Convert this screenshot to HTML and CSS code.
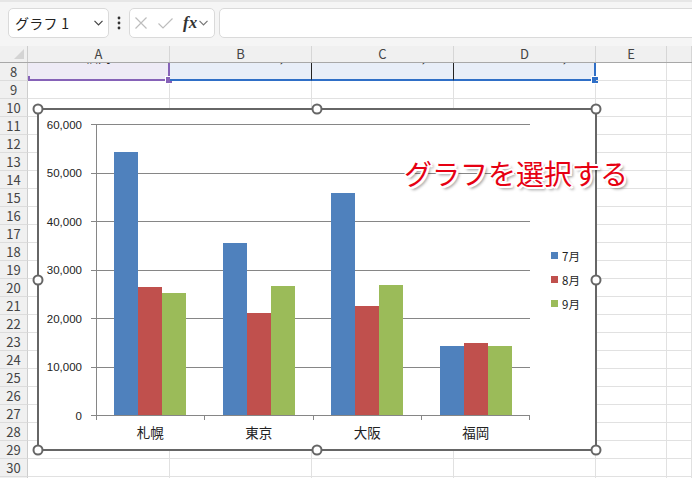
FILE: index.html
```html
<!DOCTYPE html>
<html lang="ja">
<head>
<meta charset="utf-8">
<title>グラフ 1</title>
<link rel="stylesheet" href="styles.css">
</head>
<body>
<div class="toolbar">
  <div class="box namebox"><span>グラフ 1</span><svg class="chev" width="9" height="6" viewBox="0 0 9 6"><polyline points="0.5,0.8 4.5,4.8 8.5,0.8" fill="none" stroke="#444" stroke-width="1.2"/></svg></div>
  <div class="dots"><svg width="4" height="14" viewBox="0 0 4 14"><circle cx="2" cy="2" r="1.4" fill="#333"/><circle cx="2" cy="7" r="1.4" fill="#333"/><circle cx="2" cy="12" r="1.4" fill="#333"/></svg></div>
  <div class="box fxbox">
    <svg class="ico-x" width="12" height="12" viewBox="0 0 12 12"><path d="M0.5 0.5 L11.5 11.5 M11.5 0.5 L0.5 11.5" stroke="#bdbdbd" stroke-width="1.2" fill="none"/></svg>
    <svg class="ico-ok" width="15" height="11" viewBox="0 0 15 11"><polyline points="0.5,5.5 5,10 14.5,0.5" fill="none" stroke="#bdbdbd" stroke-width="1.2"/></svg>
    <span class="fx">fx</span>
    <svg class="chev2" width="9" height="6" viewBox="0 0 9 6"><polyline points="0.5,0.8 4.5,4.8 8.5,0.8" fill="none" stroke="#777" stroke-width="1.2"/></svg>
  </div>
  <div class="box formula"></div>
</div>

<div class="sheet">
  <div class="row head">
    <div class="corner"><i></i></div>
    <div class="h">A</div><div class="h">B</div><div class="h">C</div><div class="h">D</div><div class="h">E</div><div class="h"></div>
  </div>
  <div class="row r8">
    <div class="rh">8</div>
    <div class="c a"><span class="clip"><span class="t">福岡</span></span><i class="hdl hp"></i><i class="hdl-l"></i></div>
    <div class="c v"><span class="clip"><span class="t">14,210</span></span></div>
    <div class="c v"><span class="clip"><span class="t">14,830</span></span></div>
    <div class="c v last"><span class="clip"><span class="t">14,250</span></span><i class="hdl hb"></i></div>
    <div class="c"></div><div class="c"></div>
  </div>
  <div class="row"><div class="rh">9</div><div class="c"></div><div class="c"></div><div class="c"></div><div class="c"></div><div class="c"></div><div class="c"></div></div>
  <div class="row"><div class="rh">10</div><div class="c"></div><div class="c"></div><div class="c"></div><div class="c"></div><div class="c"></div><div class="c"></div></div>
  <div class="row"><div class="rh">11</div><div class="c"></div><div class="c"></div><div class="c"></div><div class="c"></div><div class="c"></div><div class="c"></div></div>
  <div class="row"><div class="rh">12</div><div class="c"></div><div class="c"></div><div class="c"></div><div class="c"></div><div class="c"></div><div class="c"></div></div>
  <div class="row"><div class="rh">13</div><div class="c"></div><div class="c"></div><div class="c"></div><div class="c"></div><div class="c"></div><div class="c"></div></div>
  <div class="row"><div class="rh">14</div><div class="c"></div><div class="c"></div><div class="c"></div><div class="c"></div><div class="c"></div><div class="c"></div></div>
  <div class="row"><div class="rh">15</div><div class="c"></div><div class="c"></div><div class="c"></div><div class="c"></div><div class="c"></div><div class="c"></div></div>
  <div class="row"><div class="rh">16</div><div class="c"></div><div class="c"></div><div class="c"></div><div class="c"></div><div class="c"></div><div class="c"></div></div>
  <div class="row"><div class="rh">17</div><div class="c"></div><div class="c"></div><div class="c"></div><div class="c"></div><div class="c"></div><div class="c"></div></div>
  <div class="row"><div class="rh">18</div><div class="c"></div><div class="c"></div><div class="c"></div><div class="c"></div><div class="c"></div><div class="c"></div></div>
  <div class="row"><div class="rh">19</div><div class="c"></div><div class="c"></div><div class="c"></div><div class="c"></div><div class="c"></div><div class="c"></div></div>
  <div class="row"><div class="rh">20</div><div class="c"></div><div class="c"></div><div class="c"></div><div class="c"></div><div class="c"></div><div class="c"></div></div>
  <div class="row"><div class="rh">21</div><div class="c"></div><div class="c"></div><div class="c"></div><div class="c"></div><div class="c"></div><div class="c"></div></div>
  <div class="row"><div class="rh">22</div><div class="c"></div><div class="c"></div><div class="c"></div><div class="c"></div><div class="c"></div><div class="c"></div></div>
  <div class="row"><div class="rh">23</div><div class="c"></div><div class="c"></div><div class="c"></div><div class="c"></div><div class="c"></div><div class="c"></div></div>
  <div class="row"><div class="rh">24</div><div class="c"></div><div class="c"></div><div class="c"></div><div class="c"></div><div class="c"></div><div class="c"></div></div>
  <div class="row"><div class="rh">25</div><div class="c"></div><div class="c"></div><div class="c"></div><div class="c"></div><div class="c"></div><div class="c"></div></div>
  <div class="row"><div class="rh">26</div><div class="c"></div><div class="c"></div><div class="c"></div><div class="c"></div><div class="c"></div><div class="c"></div></div>
  <div class="row"><div class="rh">27</div><div class="c"></div><div class="c"></div><div class="c"></div><div class="c"></div><div class="c"></div><div class="c"></div></div>
  <div class="row"><div class="rh">28</div><div class="c"></div><div class="c"></div><div class="c"></div><div class="c"></div><div class="c"></div><div class="c"></div></div>
  <div class="row"><div class="rh">29</div><div class="c"></div><div class="c"></div><div class="c"></div><div class="c"></div><div class="c"></div><div class="c"></div></div>
  <div class="row"><div class="rh">30</div><div class="c"></div><div class="c"></div><div class="c"></div><div class="c"></div><div class="c"></div><div class="c"></div></div>
  <div class="row"><div class="rh">31</div><div class="c"></div><div class="c"></div><div class="c"></div><div class="c"></div><div class="c"></div><div class="c"></div></div>

  <div class="chart">
    <div class="ylabels">
      <div class="yl"><span>60,000</span><i></i></div>
      <div class="yl"><span>50,000</span><i></i></div>
      <div class="yl"><span>40,000</span><i></i></div>
      <div class="yl"><span>30,000</span><i></i></div>
      <div class="yl"><span>20,000</span><i></i></div>
      <div class="yl"><span>10,000</span><i></i></div>
      <div class="yl"><span>0</span><i></i></div>
    </div>
    <div class="plot">
      <div class="lines"><div></div><div></div><div></div><div></div><div></div><div></div></div>
      <div class="bars">
        <div class="cat"><div class="bar s7" style="height:263px"></div><div class="bar s8" style="height:128px"></div><div class="bar s9" style="height:122px"></div></div>
        <div class="cat"><div class="bar s7" style="height:172px"></div><div class="bar s8" style="height:102px"></div><div class="bar s9" style="height:129px"></div></div>
        <div class="cat"><div class="bar s7" style="height:222px"></div><div class="bar s8" style="height:109px"></div><div class="bar s9" style="height:130px"></div></div>
        <div class="cat"><div class="bar s7" style="height:69px"></div><div class="bar s8" style="height:72px"></div><div class="bar s9" style="height:69px"></div></div>
      </div>
    </div>
    <div class="legend">
      <div class="li"><b class="s7"></b>7月</div>
      <div class="li"><b class="s8"></b>8月</div>
      <div class="li"><b class="s9"></b>9月</div>
    </div>
    <div class="xaxis">
      <div class="xticks"><i></i><i></i><i></i><i></i></div>
      <div class="xlabels"><span>札幌</span><span>東京</span><span>大阪</span><span>福岡</span></div>
    </div>
    <div class="handles">
      <i class="hd t l"></i><i class="hd t m"></i><i class="hd t r"></i>
      <i class="hd mid l"></i><i class="hd mid r"></i>
      <i class="hd b l"></i><i class="hd b m"></i><i class="hd b r"></i>
    </div>
  </div>

  <div class="callout">グラフを選択する</div>
</div>
</body>
</html>
```

FILE: styles.css
```css
* { box-sizing: border-box; margin: 0; padding: 0; }

body {
  width: 692px;
  height: 478px;
  overflow: hidden;
  background: #fff;
  font-family: "Noto Sans CJK JP", "Noto Sans", sans-serif;
  color: #222;
}

/* ---------- formula bar ---------- */
.toolbar {
  height: 46px;
  background: #f5f5f5;
  border-top: 2px solid #e6e6e6;
  display: flex;
  align-items: flex-start;
  padding: 6px 0 0 8px;
  overflow: hidden;
}

.box {
  height: 30px;
  background: #fff;
  border: 1px solid #dadada;
  border-radius: 5px;
  display: flex;
  align-items: center;
}

.namebox {
  width: 101px;
  padding: 0 5px 0 6px;
  justify-content: space-between;
  font-size: 14px;
  line-height: 1;
  letter-spacing: 0.3px;
  color: #222;
}

.dots {
  width: 20px;
  height: 30px;
  display: flex;
  align-items: center;
  justify-content: center;
}

.fxbox {
  width: 86px;
  padding-left: 5px;
}

.ico-ok { margin-left: 11px; }

.fx {
  margin-left: 10px;
  font-family: "Liberation Serif", serif;
  font-style: italic;
  font-weight: bold;
  font-size: 17px;
  line-height: 1;
  color: #333;
  margin-top: -2px;
}

.chev2 { margin-left: 2px; }

.formula {
  flex: 1;
  margin-left: 4px;
  margin-right: -10px;
}

/* ---------- sheet ---------- */
.sheet {
  position: relative;
  height: 432px;
  overflow: hidden;
}

.row {
  display: grid;
  grid-template-columns: 28px 142px 142px 142px 142px 71px 1fr;
  height: 18px;
}

.rh {
  background: #f0f0f0;
  border-right: 1px solid #cdcdcd;
  border-bottom: 1px solid #dcdcdc;
  font-size: 13px;
  line-height: 17px;
  color: #444;
  text-align: center;
}

.c {
  border-right: 1px solid #e1e1e1;
  border-bottom: 1px solid #e1e1e1;
}

.head {
  height: 17px;
  background: #f0f0f0;
  border-bottom: 1px solid #a8a8a8;
}

.head .h {
  border-right: 1px solid #d6d6d6;
  text-align: center;
  font-size: 13px;
  line-height: 16px;
  color: #444;
}

.corner {
  border-right: 1px solid #cdcdcd;
  display: flex;
  align-items: flex-end;
  justify-content: flex-end;
  padding: 0 3px 3px 0;
}

.corner i {
  width: 0;
  height: 0;
  border-left: 10px solid transparent;
  border-bottom: 10px solid #d4d4d4;
}

/* row 8 : data range highlight */
.r8 { height: 18px; }

.r8 .c {
  position: relative;
  font-size: 13px;
  color: #222;
}

.r8 .clip {
  display: block;
  height: 100%;
  overflow: hidden;
}

.r8 .t {
  display: block;
  margin-top: -15px;
  line-height: 18px;
}

.r8 .a {
  background: #eeebf6;
  border-bottom: 2px solid #8662b8;
  border-right: 2px solid #8662b8;
  text-align: center;
}

.r8 .v {
  background: #e8eef8;
  border-bottom: 2px solid #2f6fc7;
  border-right: 1px solid #222;
  text-align: right;
  padding-right: 6px;
}

.r8 .v.last { border-right: 2px solid #2f6fc7; }

.hdl {
  position: absolute;
  right: -5px;
  bottom: -5px;
  width: 8px;
  height: 8px;
  border: 1px solid #fff;
}

.hp { background: #8662b8; }
.hb { background: #2f6fc7; }

.hdl-l {
  position: absolute;
  left: 0;
  bottom: -2px;
  width: 2px;
  height: 5px;
  background: #8662b8;
}

/* ---------- chart ---------- */
.chart {
  position: absolute;
  left: 37px;
  top: 62px;
  width: 560px;
  height: 343px;
  border: 2px solid #666;
  background: #fff;
  display: grid;
  grid-template-columns: 57px 434px 1fr;
  grid-template-rows: 292px 1fr;
  padding-top: 14px;
}

.ylabels {
  grid-column: 1;
  grid-row: 1;
  display: flex;
  flex-direction: column;
  justify-content: space-between;
}

.yl {
  height: 1px;
  display: flex;
  align-items: center;
  justify-content: flex-end;
}

.yl span {
  font-family: "Liberation Sans", Arial, sans-serif;
  font-size: 11.5px;
  line-height: 12px;
  color: #222;
  margin-right: 9px;
}

.yl i {
  width: 5px;
  height: 1px;
  background: #868686;
}

.plot {
  grid-column: 2;
  grid-row: 1;
  display: grid;
}

.lines, .bars { grid-area: 1 / 1; }

.lines {
  display: flex;
  flex-direction: column;
  border-left: 1px solid #868686;
  border-bottom: 1px solid #868686;
}

.lines div {
  flex: 1;
  border-top: 1px solid #868686;
}

.bars {
  display: flex;
  padding-bottom: 1px;
}

.cat {
  flex: 1;
  display: flex;
  align-items: flex-end;
  justify-content: center;
}

.bar { width: 24px; }

.s7 { background: #4f81bd; }
.s8 { background: #c0504d; }
.s9 { background: #9bbb59; }

.xaxis {
  grid-column: 2;
  grid-row: 2;
}

.xticks {
  display: flex;
  height: 4px;
}

.xticks i {
  flex: 1;
  border-left: 1px solid #868686;
}

.xticks i:last-child { border-right: 1px solid #868686; }

.xlabels {
  display: flex;
  margin-top: 2px;
}

.xlabels span {
  flex: 1;
  text-align: center;
  font-size: 13.5px;
  line-height: 20px;
  color: #222;
}

.legend {
  grid-column: 3;
  grid-row: 1 / 3;
  align-self: center;
  margin-top: -14px;
  padding-left: 21px;
}

.li {
  display: flex;
  align-items: center;
  height: 24px;
  font-size: 11.5px;
  color: #222;
}

.li b {
  width: 7px;
  height: 7px;
  margin-right: 4px;
}

.handles {
  position: absolute;
  inset: -1px;
  pointer-events: none;
}

.hd {
  position: absolute;
  width: 11px;
  height: 11px;
  border: 2px solid #666;
  border-radius: 50%;
  background: #fff;
  transform: translate(-50%, -50%);
}

.hd.t { top: 0; }
.hd.mid { top: 50%; }
.hd.b { top: 100%; }
.hd.l { left: 0; }
.hd.m { left: 50%; }
.hd.r { left: 100%; }

/* ---------- annotation ---------- */
.callout {
  position: absolute;
  left: 404px;
  top: 113px;
  font-size: 28px;
  line-height: 1;
  color: #e60012;
  white-space: nowrap;
  text-shadow:
    -1px -1px 0 #fff, 1px -1px 0 #fff, -1px 1px 0 #fff, 1px 1px 0 #fff,
    0 -2px 0 #fff, 0 2px 0 #fff, -2px 0 0 #fff, 2px 0 0 #fff,
    2px 2px 0 #fff, 3px 3px 3px rgba(0, 0, 0, 0.45);
}
```
